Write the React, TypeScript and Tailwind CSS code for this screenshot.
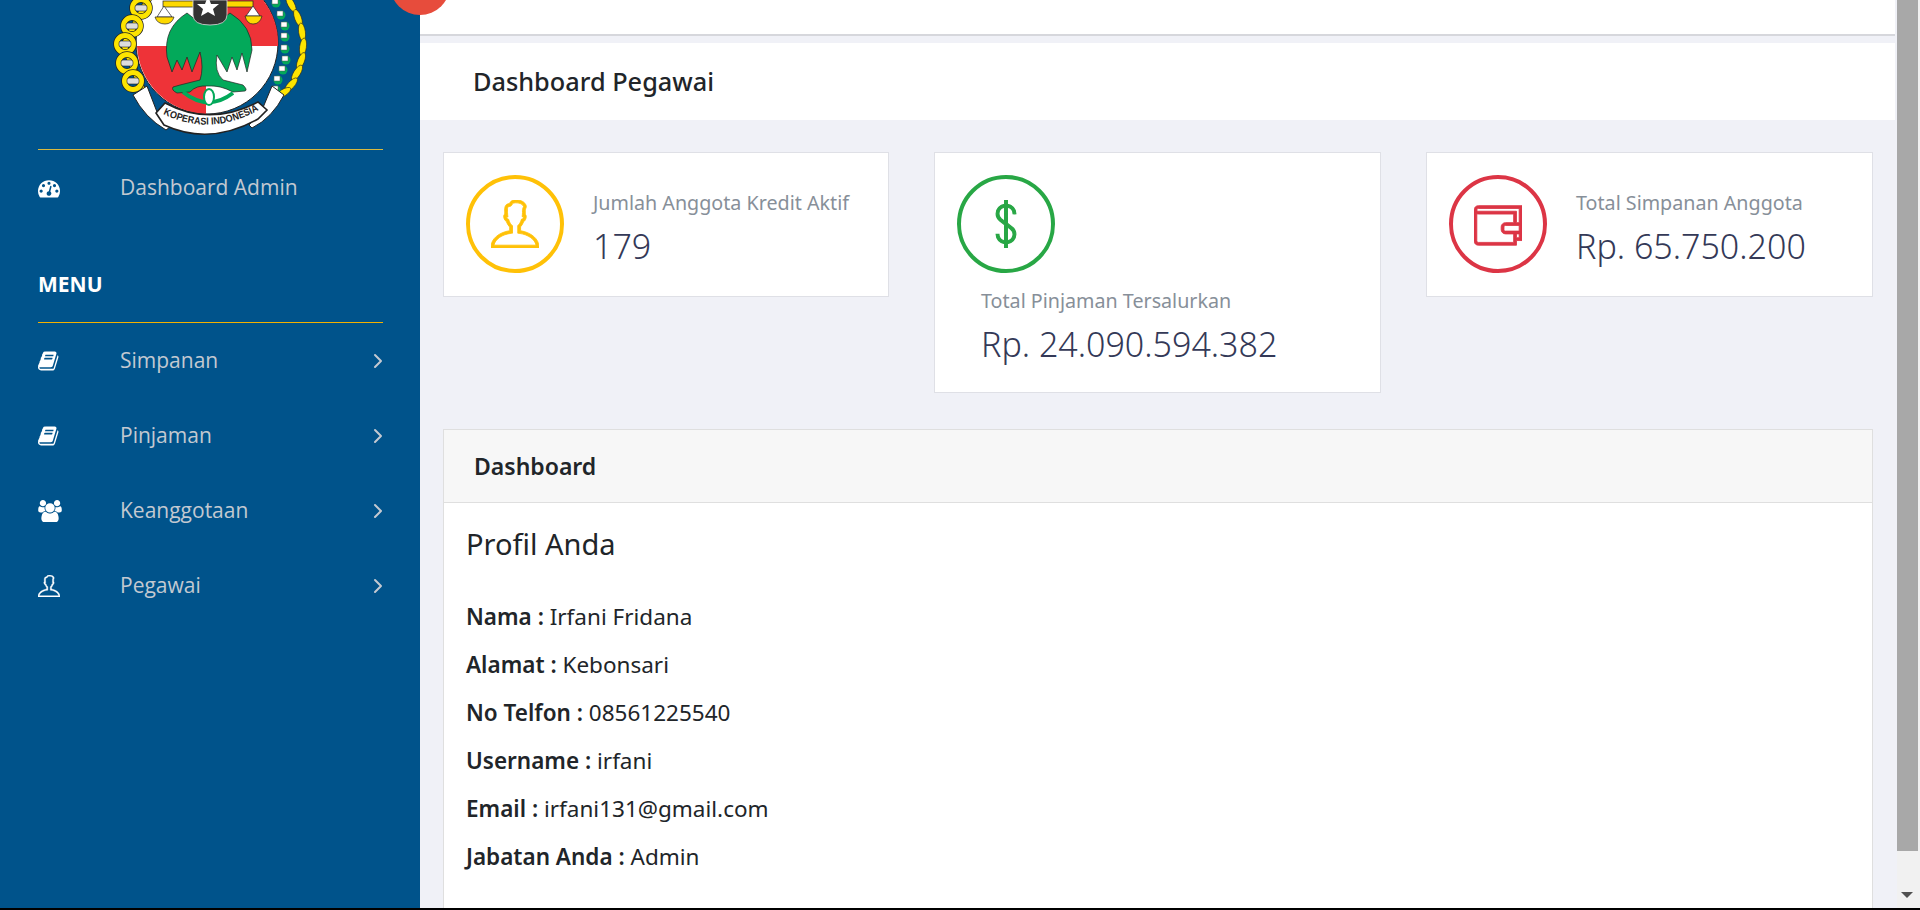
import { ChevronRight } from "lucide-react"
import { TfiMoney, TfiUser, TfiWallet } from "react-icons/tfi"
import type { ReactNode } from "react"

const contentFont = "font-['Noto_Sans','Open_Sans',sans-serif]"

function BookIcon() {
  return (
    <svg viewBox="0 0 1792 1792" className="w-[22px] h-[22px]" fill="currentColor">
      <path d="M1639 478q40 57 18 129l-275 906q-19 64-76.5 107.5t-122.5 43.5h-923q-77 0-148.5-53.5t-99.5-131.5q-24-67-2-127 0-4 3-27t4-37q1-8-3-21.5t-3-19.5q2-11 8-21t16.5-23.5 16.5-23.5q23-38 45-91.5t30-91.5q3-10 .5-30t-.5-28q3-11 17-28t17-23q21-36 42-92t25-90q1-9-2.5-32t.5-28q4-13 22-30.5t22-22.5q19-26 42.5-84.5t27.5-96.5q1-8-3-25.5t-2-26.5q2-8 9-18t18-23 17-21q8-12 16.5-30.5t15-35 16-36 19.5-32 26.5-23.5 36-11.5 47.5 5.5l-1 3q38-9 51-9h761q74 0 114 56t18 130l-274 906q-36 119-71.5 153.5t-128.5 34.5h-869q-27 0-38 15-11 16-1 43 24 70 144 70h923q29 0 56-15.5t35-41.5l300-987q7-22 5-57 38 15 59 43zm-1064 2q-4 13 2 22.5t20 9.5h608q13 0 25.5-9.5t16.5-22.5l21-64q4-13-2-22.5t-20-9.5h-608q-13 0-25.5 9.5t-16.5 22.5zm-83 256q-4 13 2 22.5t20 9.5h608q13 0 25.5-9.5t16.5-22.5l21-64q4-13-2-22.5t-20-9.5h-608q-13 0-25.5 9.5t-16.5 22.5z" />
    </svg>
  )
}

function UsersIcon() {
  return (
    <svg viewBox="0 0 1920 1792" className="w-[24px] h-[22px]" fill="currentColor">
      <path d="M593 896q-162 5-265 128h-134q-82 0-138-40.5t-56-118.5q0-353 124-353 6 0 43.5 21t97.5 42.5 119 21.5q67 0 133-23-5 37-5 66 0 139 81 256zm1071 637q0 120-73 189.5t-194 69.5h-874q-121 0-194-69.5t-73-189.5q0-53 3.5-103.5t14-109 26.5-108.5 43-97.5 62-81 85.5-53.5 111.5-20q10 0 43 21.5t73 48 107 48 135 21.5 135-21.5 107-48 73-48 43-21.5q61 0 111.5 20t85.5 53.5 62 81 43 97.5 26.5 108.5 14 109 3.5 103.5zm-1024-1277q0 106-75 181t-181 75-181-75-75-181 75-181 181-75 181 75 75 181zm704 384q0 159-112.5 271.5t-271.5 112.5-271.5-112.5-112.5-271.5 112.5-271.5 271.5-112.5 271.5 112.5 112.5 271.5zm576 225q0 78-56 118.5t-138 40.5h-134q-103-123-265-128 81-117 81-256 0-29-5-66 66 23 133 23 59 0 119-21.5t97.5-42.5 43.5-21q124 0 124 353zm-128-609q0 106-75 181t-181 75-181-75-75-181 75-181 181-75 181 75 75 181z" />
    </svg>
  )
}

function GaugeIcon() {
  return (
    <svg viewBox="0 0 1792 1792" className="w-[22px] h-[22px]" fill="currentColor">
      <path d="M384 1152q0-53-37.5-90.5t-90.5-37.5-90.5 37.5-37.5 90.5 37.5 90.5 90.5 37.5 90.5-37.5 37.5-90.5zm192-448q0-53-37.5-90.5t-90.5-37.5-90.5 37.5-37.5 90.5 37.5 90.5 90.5 37.5 90.5-37.5 37.5-90.5zm428 481l101-382q6-26-7.5-48.5t-38.5-29.5-48 6.5-30 39.5l-101 382q-60 5-107 43.5t-63 98.5q-20 77 20 146t117 89 146-20 89-117q16-60-6-117t-72-91zm660-33q0-53-37.5-90.5t-90.5-37.5-90.5 37.5-37.5 90.5 37.5 90.5 90.5 37.5 90.5-37.5 37.5-90.5zm-640-640q0-53-37.5-90.5t-90.5-37.5-90.5 37.5-37.5 90.5 37.5 90.5 90.5 37.5 90.5-37.5 37.5-90.5zm448 192q0-53-37.5-90.5t-90.5-37.5-90.5 37.5-37.5 90.5 37.5 90.5 90.5 37.5 90.5-37.5 37.5-90.5zm320 448q0 261-141 483-19 29-54 29h-1402q-35 0-54-29-141-221-141-483 0-182 71-348t191-286 286-191 348-71 348 71 286 191 191 286 71 348z" />
    </svg>
  )
}

// koperasi emblem, only the part under the fold of the scroll is visible
function Logo() {
  const links = [
    [141, 8],
    [132, 26],
    [125, 44],
    [127, 63],
    [133, 81],
  ]
  const leaves = [
    [291, 4, 62],
    [298, 18, 70],
    [302, 32, 82],
    [303, 47, 98],
    [301, 61, 112],
    [297, 73, 122],
    [291, 85, 132],
    [283, 93, 148],
  ]
  const cotton = [
    [276, 3],
    [281, 15],
    [285, 26],
    [285, 37],
    [285, 49],
    [286, 60],
    [283, 70],
    [278, 80],
    [276, 90],
  ]
  return (
    <svg viewBox="100 0 230 140" className="w-[230px] h-[140px] block">
      <circle cx="207" cy="43" r="71" fill="#fff" stroke="#222" strokeWidth="1" />
      <path d="M137 46H206V114A71 71 0 0 1 137 46Z" fill="#ee3338" />
      <path d="M206 0H263A71 71 0 0 1 278 46H206Z" fill="#ee3338" />
      {/* beam + scales */}
      <rect x="163" y="1" width="90" height="6" fill="#fdd900" stroke="#222" strokeWidth="0.7" />
      <path d="M164 6L157 17H172Z" fill="#fff" stroke="#222" strokeWidth="0.7" />
      <path d="M155 17H174Q172 24 165 24Q157 24 155 17Z" fill="#fdd900" stroke="#222" strokeWidth="0.7" />
      <path d="M253 6L246 16H260Z" fill="#fff" stroke="#222" strokeWidth="0.7" />
      <path d="M245 16H262Q260 24 253 24Q247 24 245 16Z" fill="#fdd900" stroke="#222" strokeWidth="0.7" />
      {/* tree */}
      <path
        d="M187 13Q208 32 230 13Q252 26 252 50L247 72L242 53L237 70L232 57L227 72L217 55Q214 72 223 80L243 85Q248 90 245 91L233 92Q220 85 208 86Q196 85 190 92L177 93Q171 90 173 87L180 85L200 80Q204 68 200 52L192 72L187 57L182 70L177 60L172 72L167 57Q163 28 187 13Z"
        fill="#03a95a"
        stroke="#222"
        strokeWidth="0.7"
      />
      <path d="M183 92Q208 112 233 93" fill="none" stroke="#03a95a" strokeWidth="4" />
      <ellipse cx="209" cy="97" rx="5" ry="8" fill="#fff" stroke="#03a95a" strokeWidth="2" />
      <path d="M193 0H227V15Q227 25 210 25Q193 25 193 15Z" fill="#333" stroke="#ddd" strokeWidth="0.8" />
      <path d="M208 -4L211 4L219 4L213 9L215 16L208 12L201 16L203 9L197 4L205 4Z" fill="#fff" />
      {/* chain */}
      <path d="M150 -4L124 45L145 96" fill="none" stroke="#222" strokeWidth="7" />
      <path d="M150 -4L124 45L145 96" fill="none" stroke="#fde400" strokeWidth="5.5" />
      {links.map(([x, y]) => (
        <g key={y}>
          <ellipse cx={x} cy={y} rx="8.5" ry="8.5" fill="none" stroke="#222" strokeWidth="6.5" />
          <ellipse cx={x} cy={y} rx="8.5" ry="8.5" fill="none" stroke="#fde400" strokeWidth="5" />
          <rect x={x - 6} y={y - 3} width="12" height="6" rx="2" fill="#ddd" stroke="#222" strokeWidth="0.6" />
        </g>
      ))}
      {/* rice and cotton */}
      {leaves.map(([x, y, r]) => (
        <ellipse key={y} cx={x} cy={y} rx="9" ry="3.4" fill="#fde400" stroke="#222" strokeWidth="0.6" transform={`rotate(${r - 180} ${x} ${y})`} />
      ))}
      {cotton.map(([x, y]) => (
        <g key={y}>
          <circle cx={x} cy={y} r="4.5" fill="#03a95a" />
          <rect x={x - 4} y={y - 4} width="6" height="5" fill="#fff" stroke="#555" strokeWidth="0.5" />
        </g>
      ))}
      {/* ribbon */}
      <path d="M133 95L147 86L157 112L170 127L166 130Q145 118 133 95Z" fill="#fff" stroke="#222" strokeWidth="1" />
      <path d="M284 95L272 86L262 110L249 125L252 128Q272 118 284 95Z" fill="#fff" stroke="#222" strokeWidth="1" />
      <path d="M156 113L165 103Q210 127 258 102L267 110L258 119Q210 146 164 125Z" fill="#fff" stroke="#222" strokeWidth="1.6" />
      <path id="ribbon-arc" d="M163 114Q210 137 259 110" fill="none" />
      <text className="font-['Liberation_Sans',sans-serif] font-bold" fontSize="10" fill="#222" textLength="100" lengthAdjust="spacingAndGlyphs">
        <textPath href="#ribbon-arc" startOffset="50%" textAnchor="middle">
          KOPERASI INDONESIA
        </textPath>
      </text>
    </svg>
  )
}

function MenuRow({ icon, label }: { icon: ReactNode; label: string }) {
  return (
    <div className="h-[75px] flex items-center">
      <div className="w-[82px] text-white flex items-center">{icon}</div>
      <span className="flex-1 text-[21px] text-[#c3c9d1]">{label}</span>
      <ChevronRight className="text-[#c3c9d1] w-[24px] h-[24px] -mr-[8px]" />
    </div>
  )
}

function Sidebar() {
  return (
    <aside className="w-[420px] shrink-0 bg-[#00538b] font-['Open_Sans',sans-serif] flex flex-col overflow-hidden">
      <div className="pl-[10px] flex justify-center h-[149px]">
        <Logo />
      </div>
      <div className="ml-[38px] mr-[37px] h-px bg-[#d9b93f]" />
      <div className="mx-[38px] mt-[1px]">
        <div className="h-[74px] flex items-center">
          <div className="w-[82px] text-white flex items-center">
            <GaugeIcon />
          </div>
          <span className="text-[21px] text-[#c3c9d1]">Dashboard Admin</span>
        </div>
        <div className="mt-[35px] h-[50px] flex items-center text-white font-bold text-[21px]">MENU</div>
      </div>
      <div className="ml-[38px] mr-[37px] mt-[12px] h-px bg-[#f4b000]" />
      <div className="mx-[38px]">
        <MenuRow icon={<BookIcon />} label="Simpanan" />
        <MenuRow icon={<BookIcon />} label="Pinjaman" />
        <MenuRow icon={<UsersIcon />} label="Keanggotaan" />
        <MenuRow icon={<TfiUser className="w-[22px] h-[22px]" strokeWidth="0.3" stroke="currentColor" />} label="Pegawai" />
      </div>
    </aside>
  )
}

function StatCard({
  icon,
  ring,
  label,
  value,
}: {
  icon: ReactNode
  ring: string
  label: string
  value: string
}) {
  return (
    <div className="bg-white border border-[#dfe0e6] pl-[22px] pr-[22px] pt-[22px] pb-[23px] flex flex-wrap items-start">
      <div className={`w-[98px] h-[98px] rounded-full border-[4px] flex items-center justify-center mr-[5px] ${ring}`}>
        {icon}
      </div>
      <div className="pl-[24px] pt-[14px]">
        <div className="text-[19.7px] leading-[28px] text-[#878f99]">{label}</div>
        <div className="text-[34px] leading-[50px] mt-[4px] font-light text-[#343957]">{value}</div>
      </div>
    </div>
  )
}

function ProfileLine({ label, value }: { label: string; value: string }) {
  return (
    <div className="h-[48px] flex items-center text-[22.5px] text-[#212529]">
      <b className="font-semibold whitespace-pre">{label} : </b>
      <span>{value}</span>
    </div>
  )
}

function Scrollbar() {
  return (
    <div className="w-[23px] shrink-0 bg-[#f1f1f1] flex flex-col">
      <div className="h-[851px] w-[21px] bg-[#a8a8a8]" />
      <div className="flex-1 flex items-end justify-center pb-[10px] pr-[3px]">
        <div className="w-0 h-0 border-x-[6px] border-x-transparent border-t-[6px] border-t-[#505050]" />
      </div>
    </div>
  )
}

export default function App() {
  return (
    <div className="w-[1920px] h-[910px] overflow-hidden bg-black relative">
      <div className="h-[908px] flex overflow-hidden">
        <Sidebar />
        <main className={`flex-1 min-w-0 bg-[#f0f1f7] pr-[2px] overflow-hidden ${contentFont}`}>
          <div className="h-[36px] bg-white border-b-2 border-[#d6d7dc]" />
          <div className="mt-[7px] h-[77px] bg-white flex items-center pl-[53px] text-[25.3px] font-medium text-[#212529]">
            Dashboard Pegawai
          </div>
          <div className="pl-[23px] pr-[22px] pt-[32px]">
            <div className="grid grid-cols-[446px_447px_447px] gap-[45px] items-start">
              <StatCard
                ring="border-[#ffc107]"
                icon={<TfiUser className="w-[48px] h-[48px] text-[#ffc107]" strokeWidth="0.3" stroke="currentColor" />}
                label="Jumlah Anggota Kredit Aktif"
                value="179"
              />
              <StatCard
                ring="border-[#28a745]"
                icon={<TfiMoney className="w-[48px] h-[48px] text-[#28a745]" strokeWidth="0.4" stroke="currentColor" />}
                label="Total Pinjaman Tersalurkan"
                value="Rp. 24.090.594.382"
              />
              <StatCard
                ring="border-[#dc3545]"
                icon={<TfiWallet className="w-[48px] h-[48px] text-[#dc3545]" strokeWidth="0.3" stroke="currentColor" />}
                label="Total Simpanan Anggota"
                value="Rp. 65.750.200"
              />
            </div>
            <section className="mt-[36px] bg-white border border-[#dfdfdf]">
              <div className="h-[73px] bg-[#f7f7f7] border-b border-[#dfdfdf] flex items-center pl-[30px] text-[23px] font-semibold text-[#212529]">
                Dashboard
              </div>
              <div className="px-[22px] pt-[21px] pb-[40px]">
                <h2 className="text-[29px] leading-[40px] font-normal text-[#212529] mb-[29px]">Profil Anda</h2>
                <ProfileLine label="Nama" value="Irfani Fridana" />
                <ProfileLine label="Alamat" value="Kebonsari" />
                <ProfileLine label="No Telfon" value="08561225540" />
                <ProfileLine label="Username" value="irfani" />
                <ProfileLine label="Email" value="irfani131@gmail.com" />
                <ProfileLine label="Jabatan Anda" value="Admin" />
              </div>
            </section>
          </div>
        </main>
        <Scrollbar />
      </div>
      {/* toggle button, scrolled mostly out of view */}
      <div className="absolute left-[390px] -top-[45px] w-[60px] h-[60px] rounded-full bg-[#e74c3c]" />
    </div>
  )
}
